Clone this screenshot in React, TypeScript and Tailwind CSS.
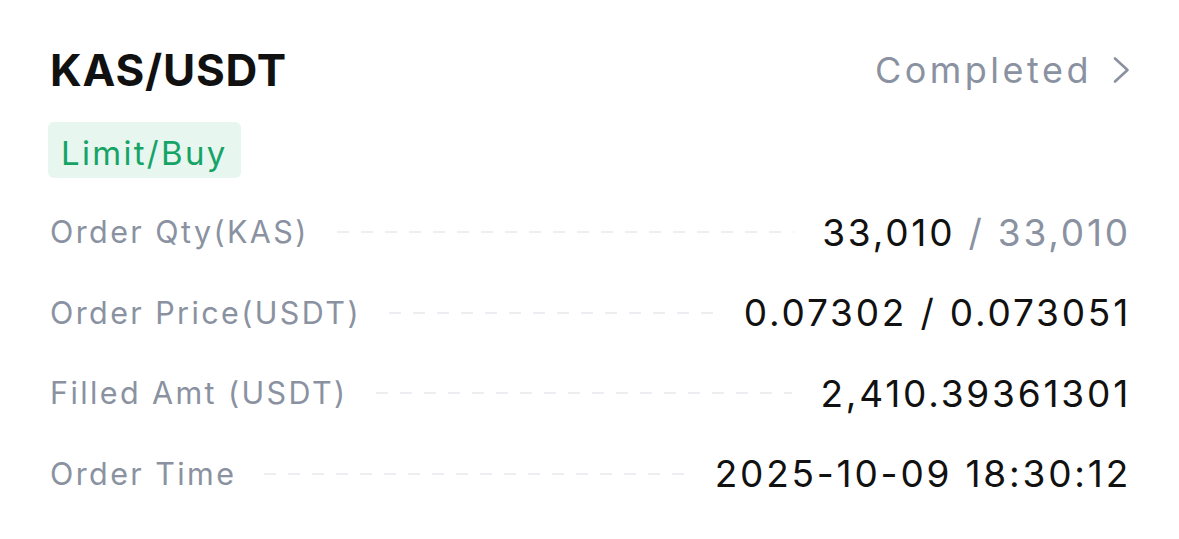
const rows = [
  { label: 'Order Qty(KAS)', value: '33,010', extra: '33,010' },
  { label: 'Order Price(USDT)', value: '0.07302 / 0.073051' },
  { label: 'Filled Amt (USDT)', value: '2,410.39361301' },
  { label: 'Order Time', value: '2025-10-09 18:30:12' }
];

export default function App() {
  return (
    <div className="w-[1179px] h-[539px] bg-white font-['Inter',sans-serif] overflow-hidden">
      <div className="pl-[50px] pr-[50px] pt-[44px]">
        <div className="flex items-center justify-between h-[52px]">
          <h1 className="text-[44px] font-bold text-[#111111] tracking-[0.8px] leading-none">
            KAS/USDT
          </h1>
          <div className="flex items-center gap-[20px] text-[#8a92a1]">
            <span className="text-[36px] tracking-[3.5px] leading-none">Completed</span>
            <svg
              width="18"
              height="28"
              viewBox="0 0 18 28"
              fill="none"
              stroke="currentColor"
              strokeWidth="2.6"
              strokeLinecap="round"
              strokeLinejoin="round"
              className="-mr-[1px]"
            >
              <polyline points="3,2.5 15.5,14 3,25.5" />
            </svg>
          </div>
        </div>

        <div className="mt-[26px] -ml-[2px] inline-flex items-center h-[56px] pt-[6px] px-[13px] rounded-[6px] bg-[#e7f6ef]">
          <span className="text-[33px] text-[#15a466] tracking-[2.3px] leading-none">Limit/Buy</span>
        </div>

        <div className="mt-[14px] flex flex-col">
          {rows.map(row => (
            <div key={row.label} className="flex items-center h-[80.5px]">
              <span className="text-[30.5px] text-[#8a92a1] tracking-[2.4px] whitespace-nowrap">
                {row.label}
              </span>
              <div className="flex-1 mx-[28px] h-[2px] bg-[linear-gradient(to_right,#eceef1_50%,transparent_50%)] bg-[length:24px_2px] bg-repeat-x" />
              <span className="text-[37px] text-[#111111] tracking-[2.8px] whitespace-nowrap -mr-[2px]">
                {row.value}
                {row.extra && <span className="text-[#8a92a1]"> / {row.extra}</span>}
              </span>
            </div>
          ))}
        </div>
      </div>
    </div>
  );
}
